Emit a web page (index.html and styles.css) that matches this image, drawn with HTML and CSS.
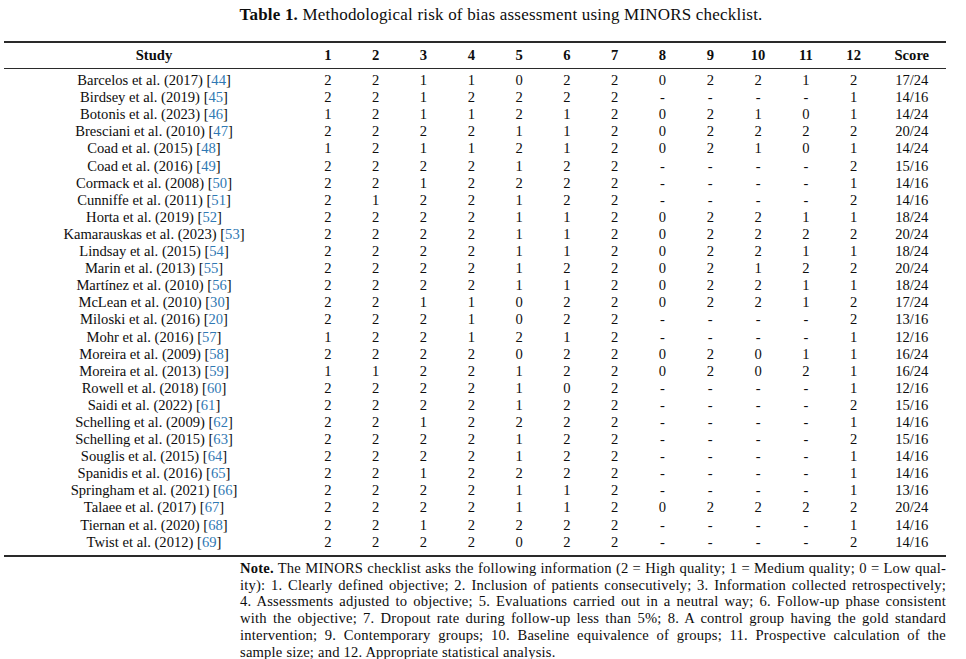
FILE: index.html
```html
<!DOCTYPE html>
<html lang="en">
<head>
<meta charset="utf-8">
<title>Table 1. MINORS checklist</title>
<link rel="stylesheet" href="styles.css">
</head>
<body>
<div class="page">
  <p class="caption"><b>Table 1.</b> Methodological risk of bias assessment using MINORS checklist.</p>
  <table class="minors">
    <colgroup>
      <col class="c-study">
      <col class="c-num"><col class="c-num"><col class="c-num"><col class="c-num"><col class="c-num"><col class="c-num">
      <col class="c-num"><col class="c-num"><col class="c-num"><col class="c-num"><col class="c-num"><col class="c-num">
      <col class="c-score">
    </colgroup>
    <thead>
      <tr><th>Study</th><th>1</th><th>2</th><th>3</th><th>4</th><th>5</th><th>6</th><th>7</th><th>8</th><th>9</th><th>10</th><th>11</th><th>12</th><th>Score</th></tr>
    </thead>
    <tbody>
      <tr><td>Barcelos et al. (2017) [<a href="#r44">44</a>]</td><td>2</td><td>2</td><td>1</td><td>1</td><td>0</td><td>2</td><td>2</td><td>0</td><td>2</td><td>2</td><td>1</td><td>2</td><td>17/24</td></tr>
      <tr><td>Birdsey et al. (2019) [<a href="#r45">45</a>]</td><td>2</td><td>2</td><td>1</td><td>2</td><td>2</td><td>2</td><td>2</td><td>-</td><td>-</td><td>-</td><td>-</td><td>1</td><td>14/16</td></tr>
      <tr><td>Botonis et al. (2023) [<a href="#r46">46</a>]</td><td>1</td><td>2</td><td>1</td><td>1</td><td>2</td><td>1</td><td>2</td><td>0</td><td>2</td><td>1</td><td>0</td><td>1</td><td>14/24</td></tr>
      <tr><td>Bresciani et al. (2010) [<a href="#r47">47</a>]</td><td>2</td><td>2</td><td>2</td><td>2</td><td>1</td><td>1</td><td>2</td><td>0</td><td>2</td><td>2</td><td>2</td><td>2</td><td>20/24</td></tr>
      <tr><td>Coad et al. (2015) [<a href="#r48">48</a>]</td><td>1</td><td>2</td><td>1</td><td>1</td><td>2</td><td>1</td><td>2</td><td>0</td><td>2</td><td>1</td><td>0</td><td>1</td><td>14/24</td></tr>
      <tr><td>Coad et al. (2016) [<a href="#r49">49</a>]</td><td>2</td><td>2</td><td>2</td><td>2</td><td>1</td><td>2</td><td>2</td><td>-</td><td>-</td><td>-</td><td>-</td><td>2</td><td>15/16</td></tr>
      <tr><td>Cormack et al. (2008) [<a href="#r50">50</a>]</td><td>2</td><td>2</td><td>1</td><td>2</td><td>2</td><td>2</td><td>2</td><td>-</td><td>-</td><td>-</td><td>-</td><td>1</td><td>14/16</td></tr>
      <tr><td>Cunniffe et al. (2011) [<a href="#r51">51</a>]</td><td>2</td><td>1</td><td>2</td><td>2</td><td>1</td><td>2</td><td>2</td><td>-</td><td>-</td><td>-</td><td>-</td><td>2</td><td>14/16</td></tr>
      <tr><td>Horta et al. (2019) [<a href="#r52">52</a>]</td><td>2</td><td>2</td><td>2</td><td>2</td><td>1</td><td>1</td><td>2</td><td>0</td><td>2</td><td>2</td><td>1</td><td>1</td><td>18/24</td></tr>
      <tr><td>Kamarauskas et al. (2023) [<a href="#r53">53</a>]</td><td>2</td><td>2</td><td>2</td><td>2</td><td>1</td><td>1</td><td>2</td><td>0</td><td>2</td><td>2</td><td>2</td><td>2</td><td>20/24</td></tr>
      <tr><td>Lindsay et al. (2015) [<a href="#r54">54</a>]</td><td>2</td><td>2</td><td>2</td><td>2</td><td>1</td><td>1</td><td>2</td><td>0</td><td>2</td><td>2</td><td>1</td><td>1</td><td>18/24</td></tr>
      <tr><td>Marin et al. (2013) [<a href="#r55">55</a>]</td><td>2</td><td>2</td><td>2</td><td>2</td><td>1</td><td>2</td><td>2</td><td>0</td><td>2</td><td>1</td><td>2</td><td>2</td><td>20/24</td></tr>
      <tr><td>Martínez et al. (2010) [<a href="#r56">56</a>]</td><td>2</td><td>2</td><td>2</td><td>2</td><td>1</td><td>1</td><td>2</td><td>0</td><td>2</td><td>2</td><td>1</td><td>1</td><td>18/24</td></tr>
      <tr><td>McLean et al. (2010) [<a href="#r30">30</a>]</td><td>2</td><td>2</td><td>1</td><td>1</td><td>0</td><td>2</td><td>2</td><td>0</td><td>2</td><td>2</td><td>1</td><td>2</td><td>17/24</td></tr>
      <tr><td>Miloski et al. (2016) [<a href="#r20">20</a>]</td><td>2</td><td>2</td><td>2</td><td>1</td><td>0</td><td>2</td><td>2</td><td>-</td><td>-</td><td>-</td><td>-</td><td>2</td><td>13/16</td></tr>
      <tr><td>Mohr et al. (2016) [<a href="#r57">57</a>]</td><td>1</td><td>2</td><td>2</td><td>1</td><td>2</td><td>1</td><td>2</td><td>-</td><td>-</td><td>-</td><td>-</td><td>1</td><td>12/16</td></tr>
      <tr><td>Moreira et al. (2009) [<a href="#r58">58</a>]</td><td>2</td><td>2</td><td>2</td><td>2</td><td>0</td><td>2</td><td>2</td><td>0</td><td>2</td><td>0</td><td>1</td><td>1</td><td>16/24</td></tr>
      <tr><td>Moreira et al. (2013) [<a href="#r59">59</a>]</td><td>1</td><td>1</td><td>2</td><td>2</td><td>1</td><td>2</td><td>2</td><td>0</td><td>2</td><td>0</td><td>2</td><td>1</td><td>16/24</td></tr>
      <tr><td>Rowell et al. (2018) [<a href="#r60">60</a>]</td><td>2</td><td>2</td><td>2</td><td>2</td><td>1</td><td>0</td><td>2</td><td>-</td><td>-</td><td>-</td><td>-</td><td>1</td><td>12/16</td></tr>
      <tr><td>Saidi et al. (2022) [<a href="#r61">61</a>]</td><td>2</td><td>2</td><td>2</td><td>2</td><td>1</td><td>2</td><td>2</td><td>-</td><td>-</td><td>-</td><td>-</td><td>2</td><td>15/16</td></tr>
      <tr><td>Schelling et al. (2009) [<a href="#r62">62</a>]</td><td>2</td><td>2</td><td>1</td><td>2</td><td>2</td><td>2</td><td>2</td><td>-</td><td>-</td><td>-</td><td>-</td><td>1</td><td>14/16</td></tr>
      <tr><td>Schelling et al. (2015) [<a href="#r63">63</a>]</td><td>2</td><td>2</td><td>2</td><td>2</td><td>1</td><td>2</td><td>2</td><td>-</td><td>-</td><td>-</td><td>-</td><td>2</td><td>15/16</td></tr>
      <tr><td>Souglis et al. (2015) [<a href="#r64">64</a>]</td><td>2</td><td>2</td><td>2</td><td>2</td><td>1</td><td>2</td><td>2</td><td>-</td><td>-</td><td>-</td><td>-</td><td>1</td><td>14/16</td></tr>
      <tr><td>Spanidis et al. (2016) [<a href="#r65">65</a>]</td><td>2</td><td>2</td><td>1</td><td>2</td><td>2</td><td>2</td><td>2</td><td>-</td><td>-</td><td>-</td><td>-</td><td>1</td><td>14/16</td></tr>
      <tr><td>Springham et al. (2021) [<a href="#r66">66</a>]</td><td>2</td><td>2</td><td>2</td><td>2</td><td>1</td><td>1</td><td>2</td><td>-</td><td>-</td><td>-</td><td>-</td><td>1</td><td>13/16</td></tr>
      <tr><td>Talaee et al. (2017) [<a href="#r67">67</a>]</td><td>2</td><td>2</td><td>2</td><td>2</td><td>1</td><td>1</td><td>2</td><td>0</td><td>2</td><td>2</td><td>2</td><td>2</td><td>20/24</td></tr>
      <tr><td>Tiernan et al. (2020) [<a href="#r68">68</a>]</td><td>2</td><td>2</td><td>1</td><td>2</td><td>2</td><td>2</td><td>2</td><td>-</td><td>-</td><td>-</td><td>-</td><td>1</td><td>14/16</td></tr>
      <tr><td>Twist et al. (2012) [<a href="#r69">69</a>]</td><td>2</td><td>2</td><td>2</td><td>2</td><td>0</td><td>2</td><td>2</td><td>-</td><td>-</td><td>-</td><td>-</td><td>2</td><td>14/16</td></tr>
    </tbody>
  </table>
  <div class="note">
    <span class="line"><b>Note.</b> The MINORS checklist asks the following information (2 = High quality; 1 = Medium quality; 0 = Low qual-</span>
    <span class="line">ity): 1. Clearly defined objective; 2. Inclusion of patients consecutively; 3. Information collected retrospectively;</span>
    <span class="line">4. Assessments adjusted to objective; 5. Evaluations carried out in a neutral way; 6. Follow-up phase consistent</span>
    <span class="line">with the objective; 7. Dropout rate during follow-up less than 5%; 8. A control group having the gold standard</span>
    <span class="line">intervention; 9. Contemporary groups; 10. Baseline equivalence of groups; 11. Prospective calculation of the</span>
    <span class="line last">sample size; and 12. Appropriate statistical analysis.</span>
  </div>
</div>
</body>
</html>
```

FILE: styles.css
```css
html, body {
  margin: 0;
  padding: 0;
  background: #ffffff;
}

body {
  font-family: "Liberation Serif", "Times New Roman", serif;
  font-size: 14.6px;
  color: #0d0d0d;
}

.page {
  padding: 5px 0 0 4px;
}

.caption {
  margin: 0 0 16px 36px;
  width: 922px;
  text-align: center;
  font-size: 17px;
  letter-spacing: 0.2px;
  line-height: 20px;
}

.caption b {
  font-weight: bold;
}

.minors {
  width: 942px;
  table-layout: fixed;
  border-collapse: separate;
  border-spacing: 0;
}

.c-study { width: 300px; }
.c-num { width: 47.8px; }
.c-score { width: 68.4px; }

.minors th,
.minors td {
  padding: 0;
  text-align: center;
  white-space: nowrap;
  line-height: 17.1px;
}

.minors th {
  font-weight: bold;
  padding: 4px 0;
  border-top: 2px solid #2a2a2a;
  border-bottom: 1px solid #2a2a2a;
}

.minors tbody tr:first-child td {
  padding-top: 3px;
}

.minors tbody tr:last-child td {
  padding-bottom: 4px;
  border-bottom: 2px solid #2a2a2a;
}

.minors a {
  color: #2f78b3;
  text-decoration: none;
}

.note {
  margin: 3px 0 0 236px;
  width: 706px;
  line-height: 16.8px;
  letter-spacing: 0.2px;
}

.note .line {
  display: block;
  white-space: nowrap;
  text-align: justify;
  text-align-last: justify;
}

.note .line.last {
  text-align-last: left;
}
```
